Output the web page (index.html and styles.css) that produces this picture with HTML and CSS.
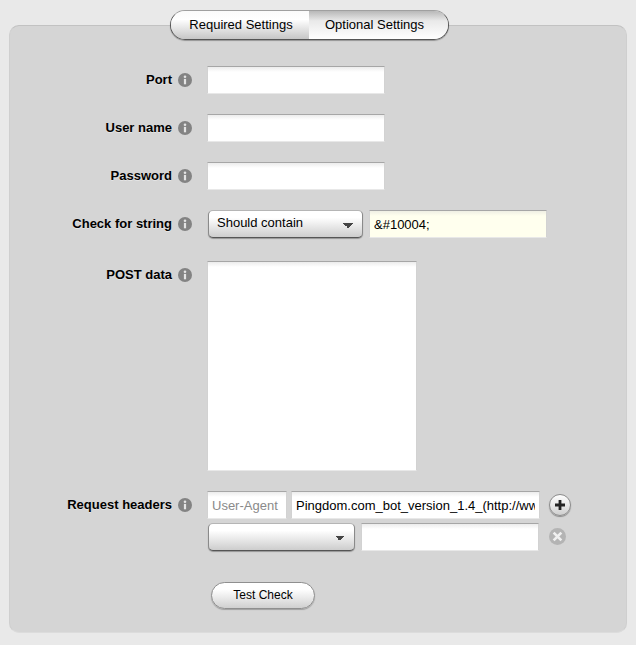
FILE: index.html

```html
<!DOCTYPE html>
<html lang="en">
<head>
    <meta charset="UTF-8">
    <title>Optional Settings</title>
    <link rel="stylesheet" href="styles.css">
</head>
<body>
    <svg class="icon-defs" width="0" height="0">
        <symbol id="info" viewBox="0 0 14 14">
            <circle cx="7" cy="7" r="7" fill="#838383"/>
            <circle cx="7" cy="3.7" r="1.3" fill="#e4e4e4"/>
            <rect x="5.9" y="5.9" width="2.2" height="5.4" fill="#e4e4e4"/>
        </symbol>
    </svg>

    <div class="tabs">
        <a class="tab tab-required">Required Settings</a>
        <a class="tab tab-optional">Optional Settings</a>
    </div>

    <form class="panel">
        <div class="row">
            <div class="field-label">Port <svg class="info"><use href="#info"/></svg></div>
            <input class="text-input short" type="text">
        </div>
        <div class="row">
            <div class="field-label">User name <svg class="info"><use href="#info"/></svg></div>
            <input class="text-input short" type="text">
        </div>
        <div class="row">
            <div class="field-label">Password <svg class="info"><use href="#info"/></svg></div>
            <input class="text-input short" type="text">
        </div>
        <div class="row">
            <div class="field-label">Check for string <svg class="info"><use href="#info"/></svg></div>
            <select class="select check-select">
                <option>Should contain</option>
            </select>
            <input class="text-input string-input" type="text" value="&amp;#10004;">
        </div>
        <div class="row row-post">
            <div class="field-label">POST data <svg class="info"><use href="#info"/></svg></div>
            <textarea class="text-input post-data"></textarea>
        </div>
        <div class="row">
            <div class="field-label">Request headers <svg class="info"><use href="#info"/></svg></div>
            <input class="text-input header-name" type="text" placeholder="User-Agent">
            <input class="text-input header-value" type="text" value="Pingdom.com_bot_version_1.4_(http://www.pingdom.com)">
            <button class="add-btn" type="button" aria-label="Add header">
                <svg width="12" height="12" viewBox="0 0 12 12"><path d="M6 1v10M1 6h10" stroke="#222" stroke-width="2.8"/></svg>
            </button>
        </div>
        <div class="row row-extra">
            <select class="select header-select">
                <option></option>
            </select>
            <input class="text-input extra-value" type="text">
            <button class="remove-btn" type="button" aria-label="Remove header">
                <svg width="11" height="11" viewBox="0 0 10 10"><path d="M1.5 1.5l7 7M8.5 1.5l-7 7" stroke="#f0f0f0" stroke-width="2.4"/></svg>
            </button>
        </div>
        <button class="test-btn" type="button">Test Check</button>
    </form>
</body>
</html>
```

FILE: styles.css

```css
* {
    box-sizing: border-box;
}

body {
    margin: 0;
    padding: 10px 9px 12px;
    background-color: #e9e9e9;
    color: #000;
    font-family: "Liberation Sans", Arial, sans-serif;
    font-size: 13px;
}

.icon-defs {
    display: block;
    height: 0;
}

/* tabs sit half over the panel's top edge */
.tabs {
    position: relative;
    z-index: 1;
    display: flex;
    width: 279px;
    height: 30px;
    margin: 0 0 -15px 161px;
    border: 1px solid #555;
    border-top-color: #a0a0a0;
    border-radius: 15px;
    overflow: hidden;
    box-shadow: 0 1px 1px rgba(0, 0, 0, 0.3);
}

.tab {
    display: flex;
    align-items: center;
    justify-content: center;
    padding-bottom: 2px;
    line-height: 1;
}

.tab-required {
    width: 138px;
    padding-left: 2px;
    background: linear-gradient(#fbfbfb, #ffffff 30%, #c6c6c6);
}

.tab-optional {
    flex-grow: 1;
    padding-right: 8px;
    background: linear-gradient(#b8b8b8, #e9e9e9 35%, #ffffff);
}

.panel {
    height: 608px;
    padding-top: 40px;
    background-color: #d5d5d5;
    border: 1px solid #cfcfcf;
    border-top-color: #c2c2c2;
    border-bottom-color: #dcdcdc;
    border-radius: 10px;
}

.row {
    display: flex;
    align-items: flex-start;
    margin-bottom: 20px;
}

.row-post {
    margin-top: 23px;
}

.row-extra {
    margin-top: -16px;
    padding-left: 197px;
}

.field-label {
    display: flex;
    flex-shrink: 0;
    align-items: center;
    justify-content: flex-end;
    gap: 6px;
    width: 197px;
    height: 28px;
    padding-right: 15px;
    padding-bottom: 2px;
    font-weight: bold;
    text-shadow: 0 1px 0 rgba(255, 255, 255, 0.4);
}

.info {
    width: 14px;
    height: 14px;
    margin-top: 2px;
}

.text-input {
    display: block;
    height: 28px;
    padding: 0 4px;
    border: 1px solid #d2d2d2;
    border-top-color: #a6a6a6;
    border-bottom-color: #e8e8e8;
    border-radius: 0;
    outline: none;
    background: linear-gradient(#ececec, #ffffff 5px);
    color: #000;
    font-family: inherit;
    font-size: 13px;
}

.text-input::placeholder {
    color: #8a8a8a;
    opacity: 1;
}

.short {
    width: 178px;
}

.string-input {
    width: 178px;
    margin-left: 6px;
    background: linear-gradient(#efefe4, #ffffee 5px);
}

.post-data {
    width: 210px;
    height: 210px;
    resize: none;
}

.header-name {
    width: 80px;
}

.header-value {
    width: 249px;
    margin-left: 4px;
}

.select {
    height: 28px;
    margin-left: 1px;
    padding: 0 24px 3px 8px;
    border: 1px solid #555;
    border-top-color: #b5b5b5;
    border-left-color: #8a8a8a;
    border-right-color: #8a8a8a;
    border-radius: 5px;
    appearance: none;
    background-color: #e0e0e0;
    background-image:
        linear-gradient(45deg, transparent 50%, #444 50%),
        linear-gradient(-45deg, transparent 50%, #444 50%),
        linear-gradient(#ffffff, #ffffff 25%, #cdcdcd);
    background-repeat: no-repeat;
    background-size: 5px 5px, 5px 5px, 100% 100%;
    background-position: right 14px top 12px, right 9px top 12px, 0 0;
    box-shadow: 0 1px 1px rgba(0, 0, 0, 0.3);
    color: #000;
    font-family: inherit;
    font-size: 13px;
}

.check-select {
    width: 155px;
}

.header-select {
    width: 147px;
}

.extra-value {
    width: 178px;
    margin-left: 6px;
}

.add-btn,
.remove-btn {
    display: flex;
    align-items: center;
    justify-content: center;
    padding: 0;
    border-radius: 50%;
}

.add-btn {
    width: 22px;
    height: 22px;
    margin: 3px 0 0 9px;
    border: 1px solid #8c8c8c;
    background: linear-gradient(#ffffff, #cfcfcf);
    box-shadow: 0 1px 1px rgba(0, 0, 0, 0.35);
}

.remove-btn {
    width: 17px;
    height: 17px;
    margin: 5px 0 0 10px;
    border: none;
    background-color: #b4b4b4;
}

.test-btn {
    display: block;
    width: 104px;
    height: 27px;
    margin: 31px 0 0 201px;
    padding: 0 0 1px;
    border: 1px solid #8f8f8f;
    border-radius: 14px;
    background: linear-gradient(#ffffff, #ffffff 25%, #d0d0d0);
    box-shadow: 0 1px 1px rgba(0, 0, 0, 0.25);
    color: #000;
    font-family: inherit;
    font-size: 12px;
}
```
